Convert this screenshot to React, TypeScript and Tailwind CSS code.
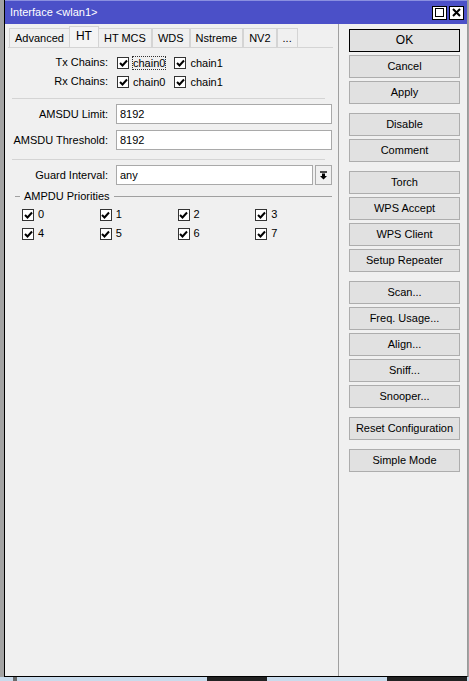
import React from 'react';

const FONT = { fontFamily: '"Liberation Sans", Arial, sans-serif' };

const TABS = ['Advanced', 'HT', 'HT MCS', 'WDS', 'Nstreme', 'NV2', '...'];

const BUTTON_GROUPS: string[][] = [
  ['OK', 'Cancel', 'Apply'],
  ['Disable', 'Comment'],
  ['Torch', 'WPS Accept', 'WPS Client', 'Setup Repeater'],
  ['Scan...', 'Freq. Usage...', 'Align...', 'Sniff...', 'Snooper...'],
  ['Reset Configuration'],
  ['Simple Mode'],
];

const Check: React.FC = () => (
  <span className="flex h-[12px] w-[12px] shrink-0 items-center justify-center border border-[#333] bg-white">
    <svg width="9" height="8" viewBox="0 0 9 8">
      <path d="M1 4 L3.5 6.5 L8 1.5" fill="none" stroke="#000" strokeWidth="2" />
    </svg>
  </span>
);

const CheckItem: React.FC<{ label: string; focus?: boolean }> = ({ label, focus }) => (
  <span className="flex items-center gap-[4px]">
    <Check />
    <span className={focus ? 'outline outline-1 outline-dotted outline-[#333] leading-[12px]' : 'leading-[12px]'}>
      {label}
    </span>
  </span>
);

const Label: React.FC<{ children: React.ReactNode }> = ({ children }) => (
  <div className="w-[104px] shrink-0 pr-[1px] text-right">{children}</div>
);

const Field: React.FC<{ value: string }> = ({ value }) => (
  <div className="flex h-[20px] flex-1 items-center border border-[#a9a9a9] bg-white px-[3px]">{value}</div>
);

const Sep: React.FC = () => <div className="ml-[7px] mr-[8px] h-px bg-[#d4d4d4]" />;

const App: React.FC = () => {
  return (
    <div style={FONT} className="flex h-[681px] w-[469px] flex-col overflow-hidden bg-[#a3a3a3] text-[11px] leading-[13px] text-black">
      <div className="ml-[4px] flex h-[677px] w-[464px] flex-col border-b border-l border-r border-b-black border-l-black border-r-[#9a9a9a] bg-[#f0f0f0]">
        {/* title bar */}
        <div className="flex h-[24px] shrink-0 items-center justify-between border-t border-[#8a8fe0] bg-[#4b50c8] pl-[5px] pr-[3px] text-white">
          <span>Interface &lt;wlan1&gt;</span>
          <div className="flex gap-[2px]">
            <span className="flex h-[14px] w-[15px] items-center justify-center border border-black bg-white">
              <span className="h-[9px] w-[9px] border border-black" />
            </span>
            <span className="flex h-[14px] w-[15px] items-center justify-center border border-black bg-white">
              <svg width="9" height="9" viewBox="0 0 9 9">
                <path d="M1 1 L8 8 M8 1 L1 8" stroke="#000" strokeWidth="2" />
              </svg>
            </span>
          </div>
        </div>

        <div className="flex flex-1">
          {/* left panel */}
          <div className="flex w-[334px] flex-col border-r border-[#a0a0a0] pt-[2px]">
            <div className="flex h-[21px] items-end pl-[4px]">
              {TABS.map((t) =>
                t === 'HT' ? (
                  <div
                    key={t}
                    className="relative -mx-[1px] z-10 flex h-[21px] items-center border border-b-0 border-[#d4d4d4] bg-[#f4f4f4] px-[6px] pb-[2px] text-[12px]"
                  >
                    {t}
                  </div>
                ) : (
                  <div
                    key={t}
                    className="flex h-[19px] items-center border border-b-0 border-[#d4d4d4] bg-[#f0f0f0] px-[5px]"
                  >
                    {t}
                  </div>
                )
              )}
            </div>
            <div className="mr-[5px] ml-[3px] flex-1 border-t border-[#d4d4d4]">
              <div className="-ml-[3px] flex flex-col pt-[5px]">
                <div className="flex h-[19px] items-center">
                  <Label>Tx Chains:</Label>
                  <div className="ml-[8px] flex items-center gap-[9px]">
                    <CheckItem label="chain0" focus />
                    <CheckItem label="chain1" />
                  </div>
                </div>
                <div className="flex h-[19px] items-center">
                  <Label>Rx Chains:</Label>
                  <div className="ml-[8px] flex items-center gap-[9px]">
                    <CheckItem label="chain0" />
                    <CheckItem label="chain1" />
                  </div>
                </div>

                <div className="pt-[7px] pb-[5px]">
                  <Sep />
                </div>

                <div className="flex flex-col gap-[6px] pr-[1px]">
                  <div className="flex items-center">
                    <Label>AMSDU Limit:</Label>
                    <div className="ml-[7px] flex flex-1">
                      <Field value="8192" />
                    </div>
                  </div>
                  <div className="flex items-center">
                    <Label>AMSDU Threshold:</Label>
                    <div className="ml-[7px] flex flex-1">
                      <Field value="8192" />
                    </div>
                  </div>
                </div>

                <div className="pt-[9px] pb-[5px]">
                  <Sep />
                </div>

                <div className="flex items-center pr-[1px]">
                  <Label>Guard Interval:</Label>
                  <div className="ml-[7px] flex flex-1 gap-[2px]">
                    <Field value="any" />
                    <div className="flex h-[20px] w-[17px] items-center justify-center border border-[#a9a9a9] bg-[#f0f0f0]">
                      <svg width="9" height="9" viewBox="0 0 9 9">
                        <path d="M1 1 H8" stroke="#000" strokeWidth="1.4" />
                        <path d="M3 2.5 H6 V5 H8 L4.5 8.5 L1 5 H3 Z" fill="#000" />
                      </svg>
                    </div>
                  </div>
                </div>

                <div className="mt-[5px] flex items-center pl-[10px] pr-[1px]">
                  <span className="h-px w-[5px] bg-[#a0a0a0]" />
                  <span className="px-[4px]">AMPDU Priorities</span>
                  <span className="h-px flex-1 bg-[#a0a0a0]" />
                </div>

                <div className="grid grid-cols-4 gap-y-[6px] pl-[17px] pt-[5px]">
                  {['0', '1', '2', '3', '4', '5', '6', '7'].map((n) => (
                    <span key={n} className="flex items-center gap-[4px]">
                      <Check />
                      <span>{n}</span>
                    </span>
                  ))}
                </div>
              </div>
            </div>
          </div>

          {/* right buttons */}
          <div className="flex flex-1 flex-col gap-[9px] pl-[10px] pr-[5px] pt-[5px]">
            {BUTTON_GROUPS.map((g, gi) => (
              <div key={gi} className="flex flex-col gap-[3px]">
                {g.map((b) => (
                  <div
                    key={b}
                    className={`flex h-[23px] w-[111px] items-center justify-center bg-[#e1e1e1] border ${
                      b === 'OK' ? 'border-black text-[12px]' : 'border-[#adadad]'
                    }`}
                  >
                    {b}
                  </div>
                ))}
              </div>
            ))}
          </div>
        </div>
      </div>
      <div className="flex h-[4px] bg-[#c9dbec]">
        <span className="ml-[13px] w-[4px] bg-[#6a6a6a]" />
        <span className="ml-[190px] w-[60px] bg-[#222]" />
        <span className="ml-[120px] w-[80px] bg-[#222]" />
      </div>
    </div>
  );
};

export default App;
